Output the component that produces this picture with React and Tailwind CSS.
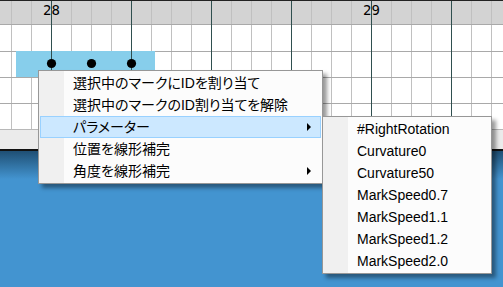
const cols = Array.from({ length: 25 }, (_, i) => 11 + i * 20);
const rows = [51, 77, 103];

const Timeline = () => (
  <svg width="503" height="130" className="block shrink-0">
    <rect x="0" y="0" width="503" height="24" fill="#d3d3d3" />
    <rect x="0" y="24" width="503" height="106" fill="#ffffff" />
    <line x1="0" y1="0.5" x2="503" y2="0.5" stroke="#222" />
    {cols.map(x => (
      <line key={x} x1={x + 0.5} y1="1" x2={x + 0.5} y2="129" stroke="#c0c0c0" />
    ))}
    <line x1="0" y1="24.5" x2="503" y2="24.5" stroke="#a9a9a9" />
    {rows.map(y => (
      <line key={y} x1="0" y1={y + 0.5} x2="503" y2={y + 0.5} stroke="#a9a9a9" />
    ))}
    <line x1="0" y1="129.5" x2="503" y2="129.5" stroke="#b8b8b8" />
    <rect x="16" y="51" width="139" height="26" fill="#87ceeb" />
    {cols.filter((_, i) => i % 4 === 2).map(x => (
      <line key={x} x1={x + 0.5} y1="1" x2={x + 0.5} y2="129" stroke="#2f4f4f" />
    ))}
    {[51.5, 91.5, 131.5].map(x => (
      <circle key={x} cx={x} cy="63.5" r="4.6" fill="#000" />
    ))}
    <text x="51.5" y="14.5" textAnchor="middle" fontFamily="DejaVu Sans Mono, monospace" fontSize="14" fill="#000">28</text>
    <text x="371.5" y="14.5" textAnchor="middle" fontFamily="DejaVu Sans Mono, monospace" fontSize="14" fill="#000">29</text>
  </svg>
);

const Arrow = () => (
  <span className="w-0 h-0 border-y-[4px] border-y-transparent border-l-[4px] border-l-black" />
);

const MenuItem = ({ label, arrow, active }) => (
  <div
    className={`mx-[1px] h-[22px] flex items-center pl-[32px] pr-[9px] border ${
      active ? "bg-[#cce8ff] border-[#99d1ff]" : "border-transparent"
    }`}
  >
    <span className="flex-1 whitespace-nowrap">{label}</span>
    {arrow && <Arrow />}
  </div>
);

const Menu = ({ items, className }) => (
  <div
    className={`absolute border border-[#979797] py-[1px] bg-[linear-gradient(to_right,#f0f0f0_25px,#fcfcfc_25px)] shadow-[4px_4px_4px_rgba(0,0,0,0.4)] ${className}`}
  >
    {items.map(it => (
      <MenuItem key={it.label} {...it} />
    ))}
  </div>
);

export default function App() {
  const main = [
    { label: "選択中のマークにIDを割り当て" },
    { label: "選択中のマークのID割り当てを解除" },
    { label: "パラメーター", arrow: true, active: true },
    { label: "位置を線形補完" },
    { label: "角度を線形補完", arrow: true },
  ];
  const sub = [
    "#RightRotation",
    "Curvature0",
    "Curvature50",
    "MarkSpeed0.7",
    "MarkSpeed1.1",
    "MarkSpeed1.2",
    "MarkSpeed2.0",
  ].map(label => ({ label }));

  return (
    <div className="relative w-[503px] h-[287px] overflow-hidden flex flex-col font-['Liberation_Sans','Noto_Sans_CJK_JP',sans-serif] text-[14px] leading-none text-black [font-feature-settings:'palt']">
      <Timeline />
      <div className="h-[19px] bg-[#ebebeb] shrink-0" />
      <div className="h-[2px] bg-[#111] shrink-0" />
      <div className="flex-1 bg-[linear-gradient(to_bottom,#1f4f74,#4394d0_28px)]" />

      <Menu items={main} className="left-[38px] top-[70px] w-[285px]" />
      <Menu items={sub} className="left-[322px] top-[116px] w-[170px]" />
    </div>
  );
}
